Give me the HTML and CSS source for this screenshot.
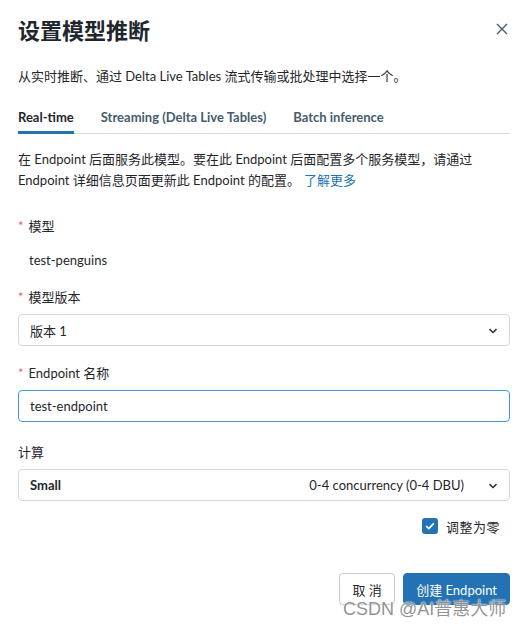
FILE: index.html
```html
<!DOCTYPE html>
<html lang="zh">
<head>
<meta charset="utf-8">
<link rel="stylesheet" href="styles.css">
</head>
<body>
<div class="dialog">
  <div class="header">
    <h1 class="title">设置模型推断</h1>
    <button class="close" aria-label="close">
      <svg width="12" height="12" viewBox="0 0 12 12"><path d="M1 1L11 11M11 1L1 11" stroke="#445d6e" stroke-width="1.4" fill="none"/></svg>
    </button>
  </div>
  <p class="subtitle">从实时推断、通过 Delta Live Tables 流式传输或批处理中选择一个。</p>
  <div class="tabs">
    <span class="tab active">Real-time</span>
    <span class="tab">Streaming (Delta Live Tables)</span>
    <span class="tab">Batch inference</span>
  </div>
  <p class="desc">在 Endpoint 后面服务此模型。要在此 Endpoint 后面配置多个服务模型，请通过 Endpoint 详细信息页面更新此 Endpoint 的配置。<a class="link">了解更多</a></p>

  <div class="field first">
    <div class="label"><span class="req">*</span>模型</div>
    <div class="static">test-penguins</div>
  </div>
  <div class="field">
    <div class="label"><span class="req">*</span>模型版本</div>
    <div class="select">
      <span class="sel-text">版本 1</span>
      <svg class="chev" width="10" height="6" viewBox="0 0 10 6"><path d="M1.5 1.2L5 4.5L8.5 1.2" stroke="#333" stroke-width="1.6" fill="none"/></svg>
    </div>
  </div>
  <div class="field">
    <div class="label"><span class="req">*</span>Endpoint 名称</div>
    <div class="input">test-endpoint</div>
  </div>
  <div class="field compute">
    <div class="label">计算</div>
    <div class="select">
      <span class="sel-text bold">Small</span>
      <span class="sel-meta">0-4 concurrency (0-4 DBU)</span>
      <svg class="chev" width="10" height="6" viewBox="0 0 10 6"><path d="M1.5 1.2L5 4.5L8.5 1.2" stroke="#333" stroke-width="1.6" fill="none"/></svg>
    </div>
  </div>
  <div class="check-row">
    <span class="checkbox">
      <svg width="10" height="8" viewBox="0 0 10 8"><path d="M1.2 4.2L3.8 6.6L8.8 1.4" stroke="#fff" stroke-width="1.8" fill="none"/></svg>
    </span>
    <span class="check-label">调整为零</span>
  </div>
  <div class="footer">
    <button class="btn">取 消</button>
    <button class="btn primary">创建 Endpoint</button>
  </div>
</div>
<div class="watermark">CSDN @AI普惠大师</div>
</body>
</html>
```
FILE: styles.css
```css
* { box-sizing: border-box; }
html, body { margin: 0; padding: 0; background: #fff; }
body {
  font-family: "Lato", "Noto Sans CJK SC", sans-serif;
  font-size: 13px;
  color: #1f272d;
  width: 531px;
  height: 629px;
  overflow: hidden;
  position: relative;
}
.dialog { padding: 15px 21px 0 18px; }
.header { display: flex; justify-content: space-between; align-items: center; height: 28px; }
.title { margin: 0; font-size: 22px; line-height: 28px; font-weight: 700; font-family: "Noto Sans CJK SC", sans-serif; color: #1f272d; }
.close { border: 0; background: none; padding: 0; margin-right: 1px; width: 14px; height: 14px; display: flex; align-items: center; justify-content: center; }
.subtitle { margin: 23px 0 0; line-height: 20px; height: 20px; }
.tabs { margin-top: 21px; display: flex; gap: 27px; border-bottom: 1px solid #d1d9e1; }
.tab { font-weight: 700; color: #445d6e; line-height: 20px; height: 27px; padding-bottom: 4px; margin-bottom: -1px; border-bottom: 3px solid transparent; }
.tab.active { color: #1f272d; border-bottom-color: #2272b4; }
.desc { margin: 15px 0 0; line-height: 21px; height: 42px; }
.link { color: #2272b4; margin-left: 4px; }
.field { margin-top: 16px; }
.field.first { margin-top: 24px; }
.field.compute { margin-top: 19px; }
.label { height: 20px; display: flex; align-items: center; }
.req { color: #e65b77; margin-right: 5px; font-size: 13px; line-height: 1; position: relative; top: 1px; }
.static { margin-top: 15px; padding-left: 11px; height: 20px; display: flex; align-items: center; }
.select, .input {
  margin-top: 8px;
  height: 32px;
  border: 1px solid #cfd9e3;
  border-radius: 4px;
  display: flex;
  align-items: center;
  padding: 0 11px 0 11px;
}
.input { border-color: #4299e0; }
.sel-text { flex: 1; }
.sel-text.bold { font-weight: 700; }
.sel-meta { margin-right: 24px; }
.chev { flex: none; margin-top: 1px; }
.check-row { margin-top: 15px; height: 20px; display: flex; justify-content: flex-end; align-items: center; gap: 8px; padding-right: 10px; }
.check-label { letter-spacing: 0.5px; }
.checkbox { width: 16px; height: 16px; border-radius: 3px; background: #2272b4; display: flex; align-items: center; justify-content: center; }
.footer { margin-top: 37px; display: flex; justify-content: flex-end; gap: 8px; }
.btn { height: 32px; padding: 0 12px; border: 1px solid #c0cdd8; border-radius: 4px; background: #fff; color: #1f272d; font: inherit; font-size: 13px; min-width: 56px; }
.btn.primary { background: #2272b4; border-color: #2272b4; color: #fff; }
.watermark {
  position: absolute; left: 343px; top: 597px;
  font-family: "Liberation Sans", "Noto Sans CJK SC", sans-serif;
  font-size: 18px; line-height: 24px; color: rgba(110,110,110,0.75);
  text-shadow: 0 0 1px #fff, 0 0 2px #fff;
}
```
